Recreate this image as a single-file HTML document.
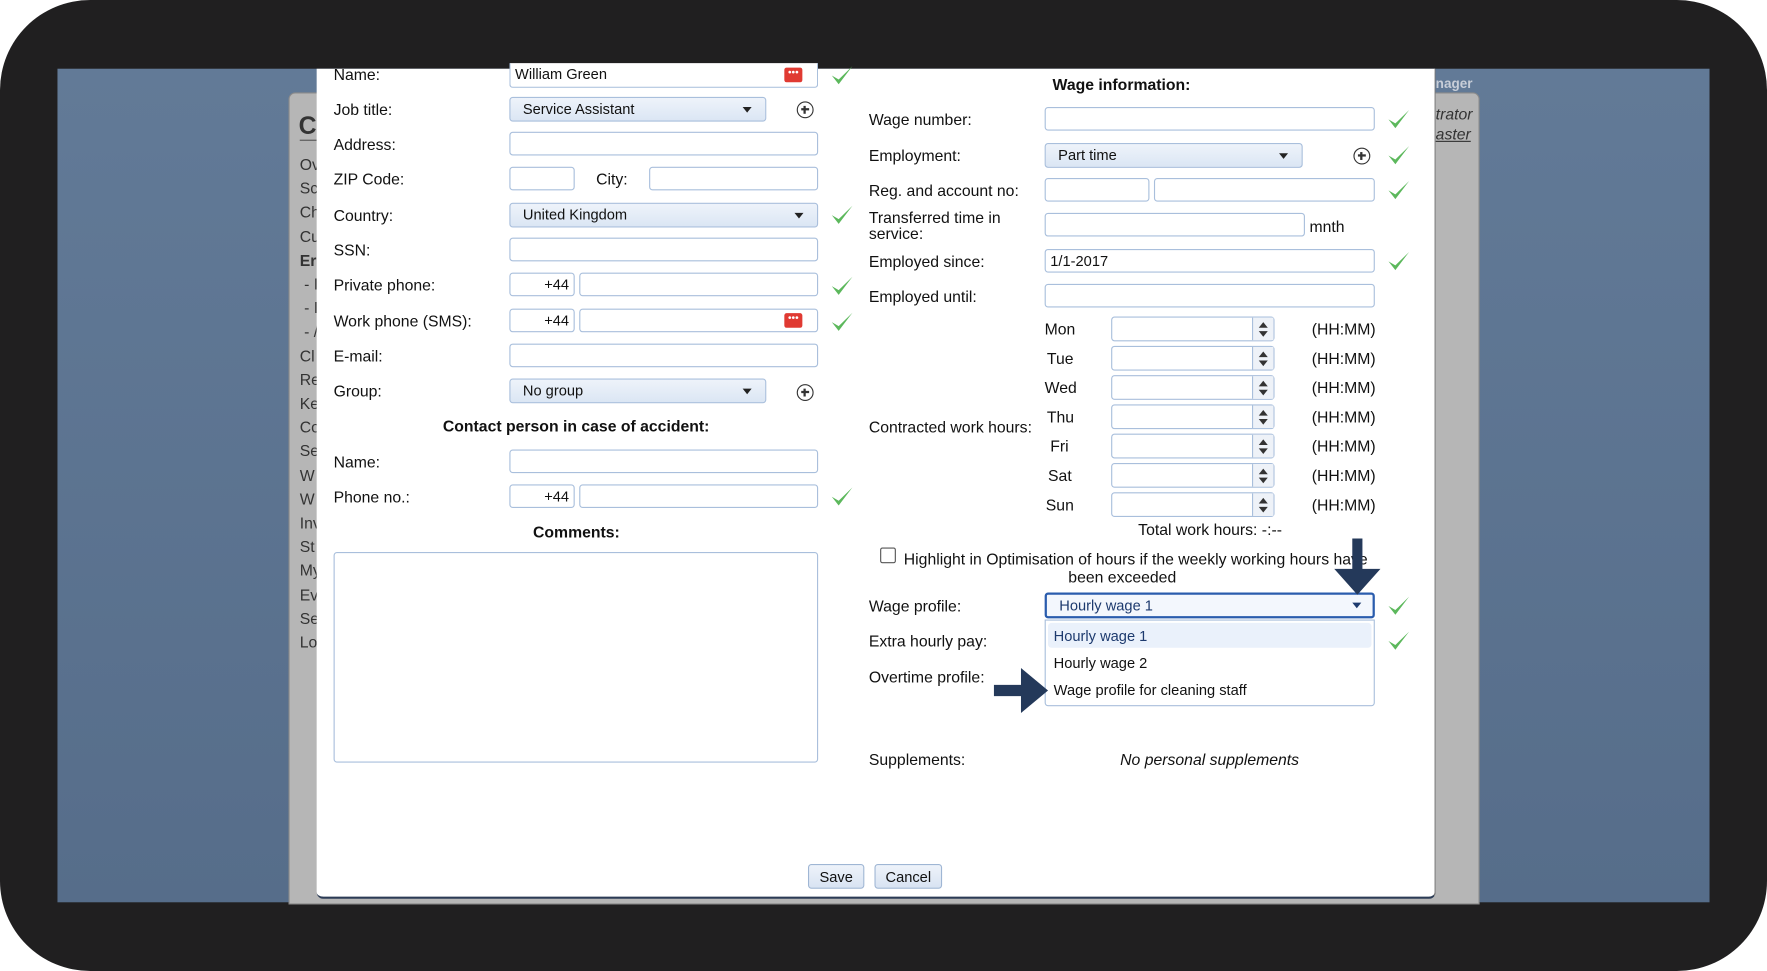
<!DOCTYPE html>
<html><head><meta charset="utf-8">
<style>
html,body{margin:0;padding:0;background:#fff;overflow:hidden}
#w{width:1568px;height:862px;transform:scale(1.12691,1.12645);transform-origin:0 0;position:relative;font-family:"Liberation Sans",Arial,sans-serif;font-size:14px;color:#111}
.a{position:absolute}
.frame{left:0;top:0;width:1568px;height:862px;background:#201f20;border-radius:80px}
.scr{left:51px;top:61px;width:1466px;height:740px;background:linear-gradient(180deg,#627a97,#566d8a)}
.gray{left:256px;top:82px;width:1055px;height:719px;background:#b6b6b6;border:1px solid #8a8a8a;border-radius:6px 6px 0 0}
.modal{left:281px;top:61px;width:992px;height:735px;background:#fff;border-bottom:2px solid #2b3b55;border-right:1px solid #777;border-radius:0 0 6px 6px}
.lb{position:absolute;font-size:14px;white-space:nowrap}
.in{position:absolute;height:21px;border:1px solid #a9bfdc;border-radius:3px;background:#fff;box-sizing:border-box;font-size:13px;line-height:19px;padding:0 4px}
.sel{position:absolute;height:22px;border:1px solid #a9bfdc;border-radius:3px;background:linear-gradient(#eef3fa,#dbe6f4);box-sizing:border-box;font-size:13px;line-height:20px;padding:0 11px}
.sel:after{content:"";position:absolute;right:12px;top:8px;border-left:4px solid transparent;border-right:4px solid transparent;border-top:5px solid #222}
.ck{position:absolute;width:20px;height:20px}
.pl{position:absolute;width:15px;height:15px;border:1.5px solid #333;border-radius:50%;box-sizing:border-box}
.pl:before{content:"";position:absolute;left:2.5px;top:5.25px;width:7px;height:1.5px;background:#333}
.pl:after{content:"";position:absolute;left:5.25px;top:2.5px;width:1.5px;height:7px;background:#333}
.red{position:absolute;width:16px;height:13px;background:#e03a32;border-radius:2px;color:#fff;font-size:9px;line-height:8px;text-align:center}
.sp{position:absolute;width:145px;height:22px;border:1px solid #a9bfdc;border-radius:3px;box-sizing:border-box}
.sp:after{content:"";position:absolute;right:0;top:0;width:18px;height:20px;border-left:1px solid #a9bfdc;background:#eef2f8}
.sp i{position:absolute;right:5px;z-index:2;border-left:4px solid transparent;border-right:4px solid transparent}
.btn{position:absolute;height:22px;border:1px solid #9fb6d4;border-radius:3px;background:linear-gradient(#eef3fa,#d8e3f2);font-size:13px;line-height:21px;text-align:center;box-sizing:border-box}
</style></head><body><div id="w">
<div class="a frame"></div>
<div class="a scr"></div>
<div class="a gray"></div>
<div class="lb" style="left:265px;top:99px;font-size:22px;font-weight:bold;color:#333">C</div>
<div class="a" style="left:266px;top:124px;width:15px;height:1px;background:#555"></div>
<div class="a" style="left:266px;top:136px;color:#333;line-height:21.2px;font-size:14px">Ov<br>Sc<br>Ch<br>Cu<br><b>Er</b><br>&nbsp;- I<br>&nbsp;- I<br>&nbsp;- /<br>Cl<br>Re<br>Ke<br>Co<br>Se<br>W<br>W<br>Inv<br>St<br>My<br>Ev<br>Se<br>Lo</div>
<div class="lb" style="left:1274px;top:67px;color:#c8ced8;font-weight:bold;font-size:12px">nager</div>
<div class="lb" style="left:1274px;top:93px;color:#333;font-style:italic">trator</div>
<div class="lb" style="left:1274px;top:111px;color:#333;font-style:italic;text-decoration:underline">aster</div>
<div class="a modal"></div>

<div class="lb" style="left:296px;top:58px">Name:</div>
<div class="in" style="left:452px;top:56px;width:274px;height:22px;border-top:none;border-radius:0 0 3px 3px">William Green</div>
<div class="red" style="left:696px;top:60px">•••</div>
<div class="lb" style="left:296px;top:89px">Job title:</div>
<div class="sel" style="left:452px;top:86px;width:228px">Service Assistant</div>
<div class="pl" style="left:707px;top:90px"></div>
<div class="lb" style="left:296px;top:120px">Address:</div>
<div class="in" style="left:452px;top:117px;width:274px"></div>
<div class="lb" style="left:296px;top:151px">ZIP Code:</div>
<div class="in" style="left:452px;top:148px;width:58px"></div>
<div class="lb" style="left:529px;top:151px">City:</div>
<div class="in" style="left:576px;top:148px;width:150px"></div>
<div class="lb" style="left:296px;top:183px">Country:</div>
<div class="sel" style="left:452px;top:180px;width:274px">United Kingdom</div>
<div class="lb" style="left:296px;top:214px">SSN:</div>
<div class="in" style="left:452px;top:211px;width:274px"></div>
<div class="lb" style="left:296px;top:245px">Private phone:</div>
<div class="in" style="left:452px;top:242px;width:58px;text-align:right">+44</div>
<div class="in" style="left:514px;top:242px;width:212px"></div>
<div class="lb" style="left:296px;top:277px">Work phone (SMS):</div>
<div class="in" style="left:452px;top:274px;width:58px;text-align:right">+44</div>
<div class="in" style="left:514px;top:274px;width:212px"></div>
<div class="red" style="left:696px;top:278px">•••</div>
<div class="lb" style="left:296px;top:308px">E-mail:</div>
<div class="in" style="left:452px;top:305px;width:274px"></div>
<div class="lb" style="left:296px;top:339px">Group:</div>
<div class="sel" style="left:452px;top:336px;width:228px">No group</div>
<div class="pl" style="left:707px;top:341px"></div>
<div class="lb" style="left:393px;top:370px;font-weight:bold">Contact person in case of accident:</div>
<div class="lb" style="left:296px;top:402px">Name:</div>
<div class="in" style="left:452px;top:399px;width:274px"></div>
<div class="lb" style="left:296px;top:433px">Phone no.:</div>
<div class="in" style="left:452px;top:430px;width:58px;text-align:right">+44</div>
<div class="in" style="left:514px;top:430px;width:212px"></div>
<div class="lb" style="left:473px;top:464px;font-weight:bold">Comments:</div>
<div class="in" style="left:296px;top:490px;width:430px;height:187px"></div>

<div class="lb" style="left:934px;top:67px;font-weight:bold">Wage information:</div>
<div class="lb" style="left:771px;top:98px">Wage number:</div>
<div class="in" style="left:927px;top:95px;width:293px"></div>
<div class="lb" style="left:771px;top:130px">Employment:</div>
<div class="sel" style="left:927px;top:127px;width:229px">Part time</div>
<div class="pl" style="left:1201px;top:131px"></div>
<div class="lb" style="left:771px;top:161px">Reg. and account no:</div>
<div class="in" style="left:927px;top:158px;width:93px"></div>
<div class="in" style="left:1024px;top:158px;width:196px"></div>
<div class="lb" style="left:771px;top:186px;line-height:14px">Transferred time in<br>service:</div>
<div class="in" style="left:927px;top:189px;width:231px"></div>
<div class="lb" style="left:1162px;top:193px">mnth</div>
<div class="lb" style="left:771px;top:224px">Employed since:</div>
<div class="in" style="left:927px;top:221px;width:293px">1/1-2017</div>
<div class="lb" style="left:771px;top:255px">Employed until:</div>
<div class="in" style="left:927px;top:252px;width:293px"></div>
<div class="lb" style="left:771px;top:371px">Contracted work hours:</div>

<div class="lb" style="left:927px;top:284px">Mon</div><div class="sp" style="left:986px;top:281px"><i style="top:4px;border-bottom:5px solid #333"></i><i style="top:12px;border-top:5px solid #333"></i></div><div class="lb" style="left:1164px;top:284px">(HH:MM)</div>
<div class="lb" style="left:929px;top:310px">Tue</div><div class="sp" style="left:986px;top:307px"><i style="top:4px;border-bottom:5px solid #333"></i><i style="top:12px;border-top:5px solid #333"></i></div><div class="lb" style="left:1164px;top:310px">(HH:MM)</div>
<div class="lb" style="left:927px;top:336px">Wed</div><div class="sp" style="left:986px;top:333px"><i style="top:4px;border-bottom:5px solid #333"></i><i style="top:12px;border-top:5px solid #333"></i></div><div class="lb" style="left:1164px;top:336px">(HH:MM)</div>
<div class="lb" style="left:929px;top:362px">Thu</div><div class="sp" style="left:986px;top:359px"><i style="top:4px;border-bottom:5px solid #333"></i><i style="top:12px;border-top:5px solid #333"></i></div><div class="lb" style="left:1164px;top:362px">(HH:MM)</div>
<div class="lb" style="left:932px;top:388px">Fri</div><div class="sp" style="left:986px;top:385px"><i style="top:4px;border-bottom:5px solid #333"></i><i style="top:12px;border-top:5px solid #333"></i></div><div class="lb" style="left:1164px;top:388px">(HH:MM)</div>
<div class="lb" style="left:930px;top:414px">Sat</div><div class="sp" style="left:986px;top:411px"><i style="top:4px;border-bottom:5px solid #333"></i><i style="top:12px;border-top:5px solid #333"></i></div><div class="lb" style="left:1164px;top:414px">(HH:MM)</div>
<div class="lb" style="left:928px;top:440px">Sun</div><div class="sp" style="left:986px;top:437px"><i style="top:4px;border-bottom:5px solid #333"></i><i style="top:12px;border-top:5px solid #333"></i></div><div class="lb" style="left:1164px;top:440px">(HH:MM)</div>
<div class="lb" style="left:1010px;top:462px">Total work hours: -:--</div>

<div class="a" style="left:781px;top:486px;width:12px;height:12px;border:1px solid #555;border-radius:2px"></div>
<div class="lb" style="left:802px;top:488px">Highlight in Optimisation of hours if the weekly working hours have</div>
<div class="lb" style="left:948px;top:504px">been exceeded</div>

<div class="lb" style="left:771px;top:530px">Wage profile:</div>
<div class="in" style="left:927px;top:526px;width:293px;height:23px;border:2px solid #2a5cad;background:#f3f7fd;color:#1d3a6e;padding-left:11px">Hourly wage 1</div>
<div class="a" style="left:1200px;top:535px;border-left:4px solid transparent;border-right:4px solid transparent;border-top:5px solid #1d3a6e"></div>
<div class="lb" style="left:771px;top:561px">Extra hourly pay:</div>
<div class="lb" style="left:771px;top:593px">Overtime profile:</div>
<div class="a" style="left:927px;top:550px;width:293px;height:77px;border:1px solid #a9bfdc;border-radius:0 0 3px 3px;background:#fff;box-sizing:border-box"></div>
<div class="a" style="left:930px;top:553px;width:287px;height:22px;background:#eaf1fb;border-radius:3px"></div>
<div class="lb" style="left:935px;top:557px;font-size:13px;color:#1d3a6e">Hourly wage 1</div>
<div class="lb" style="left:935px;top:581px;font-size:13px">Hourly wage 2</div>
<div class="lb" style="left:935px;top:605px;font-size:13px">Wage profile for cleaning staff</div>
<div class="lb" style="left:771px;top:666px">Supplements:</div>
<div class="lb" style="left:994px;top:666px;font-style:italic">No personal supplements</div>

<div class="btn" style="left:717px;top:767px;width:50px">Save</div>
<div class="btn" style="left:776px;top:767px;width:60px">Cancel</div>

<svg class="a" style="left:1180px;top:478px" width="50" height="52"><path d="M20 0H29V27H45L24.5 50L4 27H20Z" fill="#24395a"/></svg>
<svg class="a" style="left:880px;top:591px" width="52" height="46"><path d="M2 17H26V2L50 22L26 42V27H2Z" fill="#24395a"/></svg>

<svg width="0" height="0" style="position:absolute"><defs><symbol id="c" viewBox="0 0 18 18"><path d="M1 9L6.5 16L17.5 1.5L6.5 12.2Z" fill="#5cb85c"/></symbol></defs></svg>
<svg class="ck" style="left:737px;top:57px"><use href="#c"/></svg>
<svg class="ck" style="left:737px;top:181px"><use href="#c"/></svg>
<svg class="ck" style="left:737px;top:244px"><use href="#c"/></svg>
<svg class="ck" style="left:737px;top:276px"><use href="#c"/></svg>
<svg class="ck" style="left:737px;top:431px"><use href="#c"/></svg>
<svg class="ck" style="left:1231px;top:96px"><use href="#c"/></svg>
<svg class="ck" style="left:1231px;top:128px"><use href="#c"/></svg>
<svg class="ck" style="left:1231px;top:159px"><use href="#c"/></svg>
<svg class="ck" style="left:1231px;top:222px"><use href="#c"/></svg>
<svg class="ck" style="left:1231px;top:528px"><use href="#c"/></svg>
<svg class="ck" style="left:1231px;top:559px"><use href="#c"/></svg>
</div></body></html>
